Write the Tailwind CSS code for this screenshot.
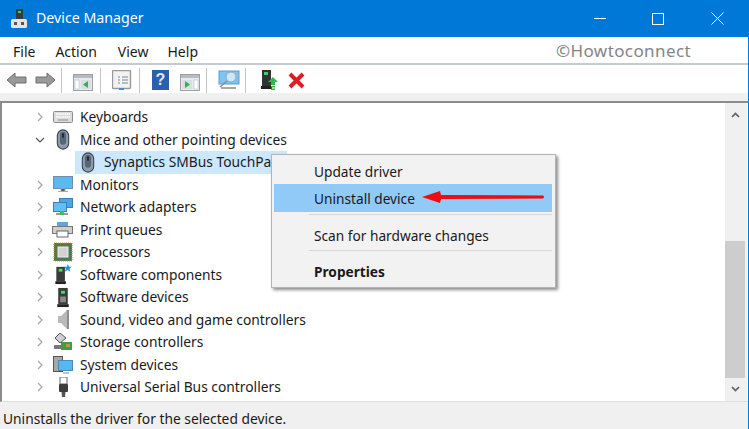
<!DOCTYPE html>
<html lang="en">
<head>
<meta charset="UTF-8">
<title>Device Manager</title>
<script src="https://cdn.jsdelivr.net/npm/@tailwindcss/browser@4"></script>
</head>
<body class="bg-white">
<svg class="hidden">
  <symbol id="mouse" viewBox="0 0 20 24">
    <rect x="3.5" y="1" width="13" height="22" rx="6.5" fill="#8f9cab" stroke="#3a3f46" stroke-width="1.2"/>
    <rect x="6.5" y="3" width="7" height="15" rx="3.5" fill="#566679"/>
    <rect x="9" y="5" width="2" height="5" fill="#20262e"/>
  </symbol>
  <symbol id="chev-r" viewBox="0 0 8 10"><path d="M2 1l4 4-4 4" fill="none" stroke="#a6a6a6" stroke-width="1.2"/></symbol>
  <symbol id="tower" viewBox="0 0 20 22">
    <rect x="5" y="1" width="10" height="17" fill="#3b3b3b"/>
    <rect x="8" y="4" width="4" height="3" fill="#4cd964"/>
    <rect x="7" y="10" width="6" height="6" fill="#8a8a8a"/>
    <rect x="4" y="18" width="12" height="3" fill="#222"/>
  </symbol>
</svg>

<div class="relative flex h-[429px] w-[749px] flex-col overflow-hidden border-r border-[#0078d7] font-['Noto_Sans',sans-serif] text-[#1a1a1a]">
  <!-- title bar -->
  <div class="flex h-[37px] shrink-0 items-center bg-[#0078d7] text-white">
    <svg class="ml-[11px] h-[20px] w-[16px]" viewBox="0 0 16 20">
      <rect x="5" y="0" width="7" height="10" fill="#3a3a3a"/>
      <rect x="7" y="2" width="3" height="2" fill="#3fcf6a"/>
      <rect x="0" y="10" width="16" height="9" rx="1.5" fill="#e4e4e4"/>
      <rect x="3" y="13" width="3" height="3" fill="#555"/>
      <rect x="10" y="13" width="3" height="3" fill="#555"/>
    </svg>
    <span class="-mt-[1px] ml-[9px] text-[14.2px]">Device Manager</span>
    <div class="ml-auto flex items-center">
      <svg class="mr-[46px] h-[13px] w-[12px]" viewBox="0 0 12 13"><path d="M0 6.5h12" stroke="#fff" stroke-width="1"/></svg>
      <svg class="mr-[47px] h-[12px] w-[12px]" viewBox="0 0 12 12"><rect x=".5" y=".5" width="11" height="11" fill="none" stroke="#fff"/></svg>
      <svg class="mr-[24px] h-[13px] w-[13px]" viewBox="0 0 13 13"><path d="M.5.5l12 12M12.5.5l-12 12" stroke="#fff" stroke-width="1"/></svg>
    </div>
  </div>

  <!-- menu bar -->
  <div class="flex h-[28px] shrink-0 items-center border-b-2 border-[#c4cbd3] pt-[2px] text-[14px]">
    <span class="ml-[13px]">File</span>
    <span class="ml-[20px]">Action</span>
    <span class="ml-[21px]">View</span>
    <span class="ml-[19px]">Help</span>
    <span class="mr-[57px] ml-auto text-[17px] tracking-[0.4px] text-[#858585]">©Howtoconnect</span>
  </div>

  <!-- toolbar -->
  <div class="flex h-[28px] shrink-0 items-center pt-[2px]">
    <svg class="ml-[6px] h-[16px] w-[21px]" viewBox="0 0 21 16"><path d="M1 8l8-7v4h11v6H9v4z" fill="#9a9a9a" stroke="#6f6f6f"/></svg>
    <svg class="ml-[8px] h-[16px] w-[21px]" viewBox="0 0 21 16"><path d="M20 8l-8-7v4H1v6h11v4z" fill="#9a9a9a" stroke="#6f6f6f"/></svg>
    <div class="ml-[5px] h-[25px] w-px bg-[#c4c4c4]"></div>
    <svg class="mt-[4px] ml-[11px] h-[17px] w-[20px]" viewBox="0 0 20 17"><rect x=".5" y=".5" width="19" height="16" fill="#e8eaec" stroke="#a0a0a0"/><rect x="1" y="1" width="18" height="3" fill="#b5bcc4"/><rect x="2" y="6" width="4" height="9" fill="#fff" stroke="#9fb5cf" stroke-width=".5"/><rect x="8" y="6" width="10" height="9" fill="#d7dee4"/><path d="M15 7v7l-5-3.500z" fill="#36b24a"/></svg>
    <div class="ml-[7px] h-[25px] w-px bg-[#c4c4c4]"></div>
    <svg class="ml-[11px] h-[21px] w-[20px]" viewBox="0 0 20 21"><rect x=".5" y=".5" width="18" height="18" rx="1" fill="#f2f2f2" stroke="#9a9a9a" stroke-width="1.400"/><path d="M6 7h2M6 10h2M6 13h2M10 7h6M10 10h6M10 13h6" stroke="#7b8794"/><rect x="7" y="18" width="5" height="2" fill="#3f8fe0"/></svg>
    <div class="ml-[7px] h-[25px] w-px bg-[#c4c4c4]"></div>
    <div class="ml-[12px] flex h-[20px] w-[17px] items-center justify-center bg-[#2e5fae] font-['Liberation_Sans',sans-serif] text-[16px] leading-none font-bold text-[#dfe8f5]">?</div>
    <svg class="mt-[4px] ml-[11px] h-[17px] w-[20px]" viewBox="0 0 20 17"><rect x=".5" y=".5" width="19" height="16" fill="#e8eaec" stroke="#a0a0a0"/><rect x="1" y="1" width="18" height="3" fill="#b5bcc4"/><rect x="14" y="6" width="4" height="9" fill="#fff" stroke="#9fb5cf" stroke-width=".5"/><rect x="2" y="6" width="10" height="9" fill="#d7dee4"/><path d="M5 7v7l5-3.500z" fill="#36b24a"/></svg>
    <div class="ml-[6px] h-[25px] w-px bg-[#c4c4c4]"></div>
    <svg class="ml-[11px] h-[20px] w-[22px]" viewBox="0 0 22 20"><rect x="1" y="1" width="20" height="13" fill="#7cc4f2" stroke="#5a9ed2"/><circle cx="13" cy="7" r="5" fill="#cfe6f7" stroke="#8fa9bf"/><path d="M9 11l-7 6M3 18h15" stroke="#8d8d8d" stroke-width="1.500"/></svg>
    <div class="ml-[5px] h-[25px] w-px bg-[#c4c4c4]"></div>
    <svg class="ml-[15px] h-[21px] w-[18px]" viewBox="0 0 18 21"><rect x="1" y="0" width="9" height="16" fill="#333"/><rect x="3" y="2" width="4" height="3" fill="#3fcf6a"/><rect x="0" y="16" width="11" height="3" fill="#222"/><path d="M12 7l5 5h-3v3h-4v-3H7z" fill="#35b84a"/><rect x="10" y="16" width="4" height="1.500" fill="#35b84a"/><rect x="10" y="18.500" width="4" height="1.500" fill="#35b84a"/></svg>
    <svg class="ml-[9px] h-[17px] w-[17px]" viewBox="0 0 17 17"><path d="M2 2l13 13M15 2L2 15" stroke="#dc1d22" stroke-width="4"/></svg>
  </div>

  <div class="h-[8px] shrink-0 bg-[#f0f0f0]"></div>

  <!-- tree pane -->
  <div class="flex min-h-0 flex-1 border-t-2 border-b border-l-2 border-[#8c8c8c] border-b-[#e0e0e0] pr-[1px]">
    <div class="min-w-0 flex-1 pt-[3px] text-[13.8px]">
      <div class="flex h-[22.500px] items-center">
        <svg class="ml-[34px] h-[10px] w-[8px]"><use href="#chev-r"/></svg>
        <svg class="ml-[9px] h-[14px] w-[20px]" viewBox="0 0 20 14"><rect x=".5" y="1.500" width="19" height="11" rx="1" fill="#dcdcdc" stroke="#8c8c8c"/><path d="M3 4h14M3 7h14" stroke="#fff" stroke-width="1.500" stroke-dasharray="1.500 .6"/><path d="M5 10h10" stroke="#aaa" stroke-width="1.500"/></svg>
        <span class="ml-[7px] pt-[1px]">Keyboards</span>
      </div>
      <div class="flex h-[22.500px] items-center">
        <svg class="ml-[33px] h-[8px] w-[10px]" viewBox="0 0 10 8"><path d="M1 2l4 4 4-4" fill="none" stroke="#555" stroke-width="1.200"/></svg>
        <svg class="ml-[8px] h-[21px] w-[20px]"><use href="#mouse"/></svg>
        <span class="ml-[7px] pt-[1px]">Mice and other pointing devices</span>
      </div>
      <div class="ml-[73px] flex h-[22.500px] w-[212px] items-center bg-[#cce8ff]">
        <svg class="ml-[3px] h-[21px] w-[20px]"><use href="#mouse"/></svg>
        <span class="ml-[6px] whitespace-nowrap pt-[1px]">Synaptics SMBus TouchPad</span>
      </div>
      <div class="flex h-[22.500px] items-center">
        <svg class="ml-[34px] h-[10px] w-[8px]"><use href="#chev-r"/></svg>
        <svg class="ml-[9px] h-[17px] w-[20px]" viewBox="0 0 20 17"><rect x=".5" y=".5" width="19" height="12" fill="#5cb8f0" stroke="#6f8ea8"/><path d="M8 13h4v2H8zM5 15.500h10" stroke="#9fb2c2"/></svg>
        <span class="ml-[7px] pt-[1px]">Monitors</span>
      </div>
      <div class="flex h-[22.500px] items-center">
        <svg class="ml-[34px] h-[10px] w-[8px]"><use href="#chev-r"/></svg>
        <svg class="ml-[9px] h-[18px] w-[20px]" viewBox="0 0 20 18"><rect x="6.500" y=".5" width="13" height="9" fill="#4aa6e8" stroke="#3b7fb5"/><rect x=".5" y="4.500" width="13" height="9" fill="#62bdf3" stroke="#3b7fb5"/><path d="M3 16h12" stroke="#9a9a9a" stroke-width="2"/><rect x="7" y="13" width="4" height="4" fill="#3fbf55"/></svg>
        <span class="ml-[7px] pt-[1px]">Network adapters</span>
      </div>
      <div class="flex h-[22.500px] items-center">
        <svg class="ml-[34px] h-[10px] w-[8px]"><use href="#chev-r"/></svg>
        <svg class="ml-[8px] h-[16px] w-[21px]" viewBox="0 0 21 16"><rect x="5" y="0" width="11" height="6" fill="#5aa9dc"/><rect x=".5" y="4.500" width="20" height="7" fill="#cfcfcf" stroke="#777"/><rect x="5" y="9" width="11" height="6" fill="#fff" stroke="#666"/></svg>
        <span class="ml-[7px] pt-[1px]">Print queues</span>
      </div>
      <div class="flex h-[22.500px] items-center">
        <svg class="ml-[34px] h-[10px] w-[8px]"><use href="#chev-r"/></svg>
        <svg class="ml-[9px] h-[20px] w-[20px]" viewBox="0 0 20 20"><rect x="1" y="1" width="18" height="18" fill="#4e7a4e" stroke="#c9953c" stroke-dasharray="1 1"/><rect x="5" y="5" width="10" height="10" fill="#d2d2d2" stroke="#eee"/></svg>
        <span class="ml-[7px] pt-[1px]">Processors</span>
      </div>
      <div class="flex h-[22.500px] items-center">
        <svg class="ml-[34px] h-[10px] w-[8px]"><use href="#chev-r"/></svg>
        <svg class="ml-[9px] h-[21px] w-[20px]" viewBox="0 0 20 22"><rect x="3" y="3" width="9" height="15" fill="#3b3b3b"/><rect x="5.500" y="5" width="4" height="3" fill="#4cd964"/><rect x="2" y="18" width="11" height="3" fill="#222"/><path d="M15 0l1.200 3h3l-2.400 2 1 3-2.800-1.800L12 8l1-3-2-2h3z" fill="#2f8ce0"/></svg>
        <span class="ml-[7px] pt-[1px]">Software components</span>
      </div>
      <div class="flex h-[22.500px] items-center">
        <svg class="ml-[34px] h-[10px] w-[8px]"><use href="#chev-r"/></svg>
        <svg class="ml-[9px] h-[21px] w-[20px]"><use href="#tower"/></svg>
        <span class="ml-[7px] pt-[1px]">Software devices</span>
      </div>
      <div class="flex h-[22.500px] items-center">
        <svg class="ml-[34px] h-[10px] w-[8px]"><use href="#chev-r"/></svg>
        <svg class="ml-[9px] h-[21px] w-[20px]" viewBox="0 0 20 21"><path d="M5 7h3l6-6h2v19h-2l-6-6H5z" fill="#b9b9b9"/><path d="M14 1h2v19h-2z" fill="#8e8e8e"/></svg>
        <span class="ml-[7px] pt-[1px]">Sound, video and game controllers</span>
      </div>
      <div class="flex h-[22.500px] items-center">
        <svg class="ml-[34px] h-[10px] w-[8px]"><use href="#chev-r"/></svg>
        <svg class="ml-[9px] h-[19px] w-[20px]" viewBox="0 0 20 19"><path d="M7 0l6 5-6 5-5-5z" fill="#cfcfcf" stroke="#555"/><rect x="1" y="12" width="8" height="4" fill="#777"/><rect x="8" y="9" width="11" height="8" fill="#3f9d4a"/><rect x="13" y="11" width="4" height="3" fill="#c9953c"/></svg>
        <span class="ml-[7px] pt-[1px]">Storage controllers</span>
      </div>
      <div class="flex h-[22.500px] items-center">
        <svg class="ml-[34px] h-[10px] w-[8px]"><use href="#chev-r"/></svg>
        <svg class="ml-[9px] h-[18px] w-[20px]" viewBox="0 0 20 18"><rect x=".5" y=".5" width="9" height="15" fill="#a8a8a8" stroke="#555"/><rect x="5.500" y="4.500" width="14" height="10" fill="#58b7f0" stroke="#4b8bb8"/><path d="M10 17h6" stroke="#9fb2c2" stroke-width="1.500"/></svg>
        <span class="ml-[7px] pt-[1px]">System devices</span>
      </div>
      <div class="flex h-[22.500px] items-center">
        <svg class="ml-[34px] h-[10px] w-[8px]"><use href="#chev-r"/></svg>
        <svg class="ml-[9px] h-[21px] w-[20px]" viewBox="0 0 20 21"><rect x="7" y="0" width="7" height="7" fill="#fff" stroke="#666"/><rect x="6" y="7" width="9" height="8" rx="1" fill="#3d3d3d"/><path d="M8.500 15h4l-.5 5h-3z" fill="#555"/></svg>
        <span class="ml-[7px] pt-[1px]">Universal Serial Bus controllers</span>
      </div>
    </div>

    <!-- scrollbar -->
    <div class="flex w-[20px] shrink-0 flex-col bg-[#f0f0f0]">
      <div class="flex h-[138px] justify-center pt-[9px]"><svg class="h-[6px] w-[9px]" viewBox="0 0 9 6"><path d="M1 5l3.500-3.500L8 5" fill="none" stroke="#606060" stroke-width="1.700"/></svg></div>
      <div class="h-[137px] bg-[#cdcdcd]"></div>
      <div class="flex flex-1 justify-center pt-[8px]"><svg class="h-[6px] w-[9px]" viewBox="0 0 9 6"><path d="M1 1l3.500 3.500L8 1" fill="none" stroke="#606060" stroke-width="1.700"/></svg></div>
    </div>
    <div class="w-[2px] shrink-0 bg-[#f0f0f0]"></div>
  </div>

  <!-- status bar -->
  <div class="flex h-[27px] shrink-0 items-center bg-[#f0f0f0] pt-[8px] pl-[3px] text-[13.8px]">Uninstalls the driver for the selected device.</div>

  <!-- context menu -->
  <div class="absolute top-[154px] left-[271px] flex h-[134px] w-[285px] flex-col border border-[#b4b4b4] bg-[#f2f2f2] pt-[1px] pr-[3px] pl-[2px] text-[13.7px] shadow-[2px_2px_3px_rgba(0,0,0,0.45)]">
    <div class="flex h-[28px] items-center pt-[4px] pl-[40px]">Update driver</div>
    <div class="flex h-[28px] items-center bg-[#91c9f7] pt-[3px] pl-[40px]">Uninstall device</div>
    <div class="mt-[2px] ml-[35px] h-px bg-[#d7d7d7]"></div>
    <div class="flex h-[35px] items-center pt-[7px] pl-[40px]">Scan for hardware changes</div>
    <div class="ml-[35px] h-px bg-[#d7d7d7]"></div>
    <div class="flex h-[36px] items-center pt-[7px] pl-[40px] font-bold">Properties</div>
  </div>

  <!-- red annotation arrow -->
  <svg class="absolute top-[189px] left-[420px] h-[16px] w-[126px]" viewBox="0 0 126 16">
    <path d="M2 8l18-6 1 4 102 .5q2 1.500 0 3L21 10l-1 4z" fill="#f00c0c"/>
  </svg>
</div>
</body>
</html>
